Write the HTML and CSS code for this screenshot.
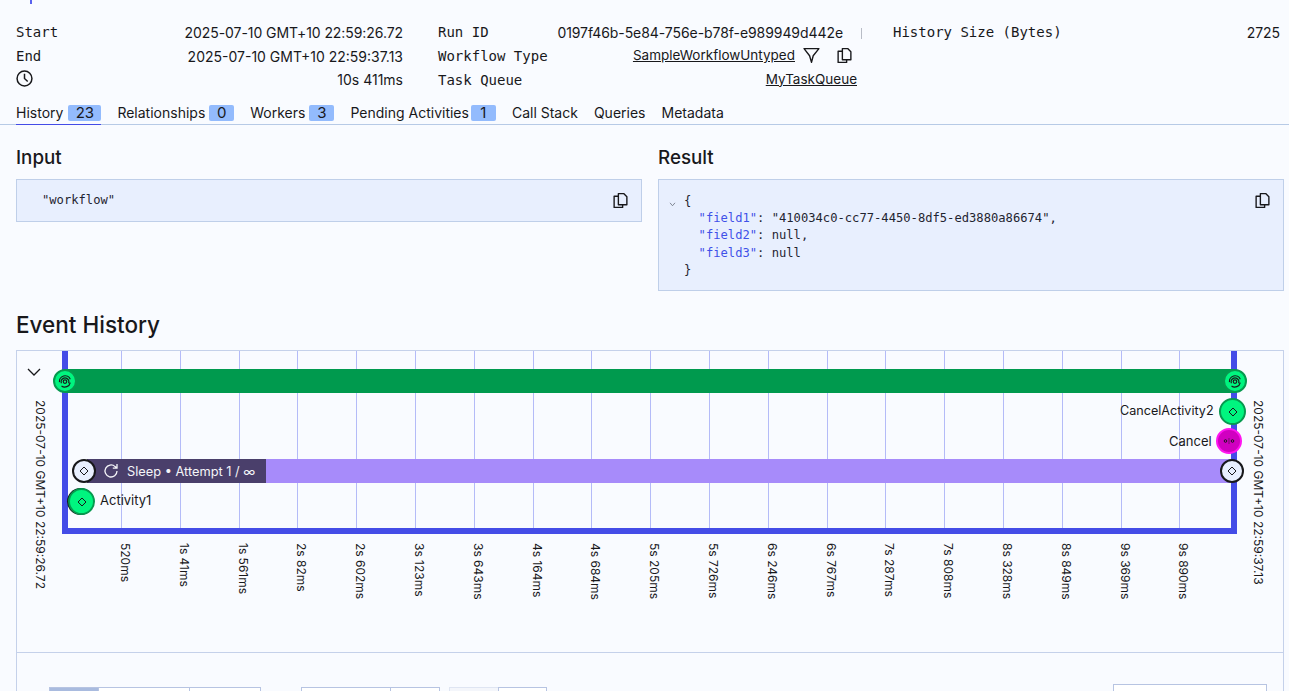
FILE: index.html
```html
<!DOCTYPE html>
<html lang="en">
<head>
	<meta charset="UTF-8">
	<meta name="viewport" content="width=device-width, initial-scale=1.0">
	<title>Workflow</title>
	<link rel="stylesheet" href="styles.css">
</head>
<body>

	<div class="top-mark"></div>

	<!-- summary -->
	<section class="summary">
		<div class="col">
			<div class="row"><span class="label">Start</span><span class="value">2025-07-10 GMT+10 22:59:26.72</span></div>
			<div class="row"><span class="label">End</span><span class="value">2025-07-10 GMT+10 22:59:37.13</span></div>
			<div class="row raised">
				<svg class="clock" viewBox="0 0 16 16"><circle cx="8" cy="8" r="7"/><path d="M8 3.6V8l3 2.8"/></svg>
				<span class="value">10s 411ms</span>
			</div>
		</div>
		<div class="col">
			<div class="row run-id"><span class="label">Run ID</span><span class="value">0197f46b-5e84-756e-b78f-e989949d442e</span></div>
			<div class="row">
				<span class="label">Workflow Type</span>
				<span class="type-value">
					<a href="#" class="link">SampleWorkflowUntyped</a>
					<svg class="icon" viewBox="0 0 16 16"><path d="M1 1.5h14L9.6 8.2 8 14.5 6.2 8.2z"/></svg>
					<svg class="icon copy" viewBox="0 0 16 16"><path d="M6 1.5h5l3 3v7.500H6zM6 4H2v10.500h8V12"/></svg>
				</span>
			</div>
			<div class="row"><span class="label">Task Queue</span><a href="#" class="link queue">MyTaskQueue</a></div>
		</div>
		<div class="col">
			<div class="row"><span class="label">History Size (Bytes)</span><span class="value">2725</span></div>
		</div>
	</section>

	<!-- tabs -->
	<nav class="tabs">
		<a href="#" class="tab active">History <span class="badge">23</span></a>
		<a href="#" class="tab">Relationships <span class="badge small">0</span></a>
		<a href="#" class="tab">Workers <span class="badge small">3</span></a>
		<a href="#" class="tab pending">Pending Activities <span class="badge small">1</span></a>
		<a href="#" class="tab">Call Stack</a>
		<a href="#" class="tab">Queries</a>
		<a href="#" class="tab">Metadata</a>
	</nav>

	<!-- input + result -->
	<section class="io">
		<div class="io-col">
			<h2>Input</h2>
			<div class="code-box">
				<div class="code">"workflow"</div>
				<svg class="icon copy box-copy" viewBox="0 0 16 16"><path d="M6 1.5h5l3 3v7.500H6zM6 4H2v10.500h8V12"/></svg>
			</div>
		</div>
		<div class="io-col">
			<h2>Result</h2>
			<div class="code-box">
				<svg class="fold" viewBox="0 0 8 6"><path d="M1 1l3 3.500L7 1"/></svg>
				<div class="code">{</div>
				<div class="code indent"><b>"field1"</b>: "410034c0-cc77-4450-8df5-ed3880a86674",</div>
				<div class="code indent"><b>"field2"</b>: null,</div>
				<div class="code indent"><b>"field3"</b>: null</div>
				<div class="code">}</div>
				<svg class="icon copy box-copy" viewBox="0 0 16 16"><path d="M6 1.5h5l3 3v7.500H6zM6 4H2v10.500h8V12"/></svg>
			</div>
		</div>
	</section>

	<h2 class="history-title">Event History</h2>

	<section class="history">
		<div class="timeline">
			<svg class="chevron" viewBox="0 0 14 8"><path d="M1 1l6 6 6-6"/></svg>

			<div class="ticks">
				<div class="tick"><i></i><span>520ms</span></div>
				<div class="tick"><i></i><span>1s 41ms</span></div>
				<div class="tick"><i></i><span>1s 561ms</span></div>
				<div class="tick"><i></i><span>2s 82ms</span></div>
				<div class="tick"><i></i><span>2s 602ms</span></div>
				<div class="tick"><i></i><span>3s 123ms</span></div>
				<div class="tick"><i></i><span>3s 643ms</span></div>
				<div class="tick"><i></i><span>4s 164ms</span></div>
				<div class="tick"><i></i><span>4s 684ms</span></div>
				<div class="tick"><i></i><span>5s 205ms</span></div>
				<div class="tick"><i></i><span>5s 726ms</span></div>
				<div class="tick"><i></i><span>6s 246ms</span></div>
				<div class="tick"><i></i><span>6s 767ms</span></div>
				<div class="tick"><i></i><span>7s 287ms</span></div>
				<div class="tick"><i></i><span>7s 808ms</span></div>
				<div class="tick"><i></i><span>8s 328ms</span></div>
				<div class="tick"><i></i><span>8s 849ms</span></div>
				<div class="tick"><i></i><span>9s 369ms</span></div>
				<div class="tick"><i></i><span>9s 890ms</span></div>
			</div>

			<div class="frame"></div>
			<span class="edge-date left">2025-07-10 GMT+10 22:59:26.72</span>
			<span class="edge-date right">2025-07-10 GMT+10 22:59:37.13</span>

			<div class="bar workflow-bar"></div>
			<div class="bar activity-bar"></div>
			<div class="bar attempt-bar">
				<svg class="retry" viewBox="0 0 16 16"><path d="M14 8a6 6 0 1 1-1.900-4.400L14 5.200M14 1v4.200H9.800"/></svg>
				<span>Sleep &bull; Attempt 1 / &infin;</span>
			</div>

			<div class="node green wf-start"><svg viewBox="0 0 12 12"><circle cx="6" cy="6.500" r="1.500"/><path d="M3 8a3.300 3.300 0 1 1 6 0M1.300 7A4.800 4.800 0 0 1 10.500 4.500M3 10.300a4.800 4.800 0 0 0 7.500-3"/></svg></div>
			<div class="node green wf-end"><svg viewBox="0 0 12 12"><circle cx="6" cy="6.500" r="1.500"/><path d="M3 8a3.300 3.300 0 1 1 6 0M1.300 7A4.800 4.800 0 0 1 10.500 4.500M3 10.300a4.800 4.800 0 0 0 7.500-3"/></svg></div>

			<div class="node pale attempt-start"><svg viewBox="0 0 12 12"><path d="M6 2l4 4-4 4-4-4z"/></svg></div>
			<div class="node pale attempt-end"><svg viewBox="0 0 12 12"><path d="M6 2l4 4-4 4-4-4z"/></svg></div>

			<div class="node green big activity1"><svg viewBox="0 0 12 12"><path d="M6 2l4 4-4 4-4-4z"/></svg></div>
			<span class="event-name activity1-name">Activity1</span>

			<div class="node green big cancel-activity"><svg viewBox="0 0 12 12"><path d="M6 2l4 4-4 4-4-4z"/></svg></div>
			<span class="event-name cancel-activity-name">CancelActivity2</span>

			<div class="node magenta cancel"><svg viewBox="0 0 12 12"><circle cx="2.500" cy="6" r="1.300"/><circle cx="9.500" cy="6" r="1.300"/><path d="M6 3.500v5" stroke-dasharray="1 1"/></svg></div>
			<span class="event-name cancel-name">Cancel</span>
		</div>

		<!-- filter row, cut off by the bottom of the window -->
		<div class="controls">
			<div class="button-group">
				<span class="btn selected w50"></span>
				<span class="btn w92"></span>
				<span class="btn w72"></span>
			</div>
			<div class="button-group">
				<span class="btn w90"></span>
				<span class="btn w50"></span>
			</div>
			<div class="button-group">
				<span class="btn faded w50"></span>
				<span class="btn w49"></span>
			</div>
			<span class="search"></span>
		</div>
	</section>

</body>
</html>
```
FILE: styles.css
```css
* {
	margin: 0;
	padding: 0;
	box-sizing: border-box;
}

body {
	height: 691px;
	overflow: hidden;
	background-color: #f9fbff;
	color: #18181b;
	font-family: Inter, "Liberation Sans", sans-serif;
	font-size: 14px;
	position: relative;
}

a {
	color: inherit;
}

.top-mark {
	position: absolute;
	left: 30px;
	top: 0;
	width: 2px;
	height: 4px;
	background-color: #5a62ee;
}

/*summary*/
.summary {
	display: flex;
	gap: 35px;
	padding: 20px 0 0 16px;
}

.col {
	width: 387px;
}

.col:nth-child(2) {
	width: 419px;
	margin-right: 1px;
}

.row {
	display: flex;
	justify-content: space-between;
	align-items: center;
	height: 24px;
}

.label {
	font-family: "DejaVu Sans Mono", monospace;
}

.row:first-child .value {
	letter-spacing: -0.07px;
}

.raised .value {
	margin-bottom: 1px;
}

.link {
	font-size: 13.500px;
}

.queue {
	margin-bottom: 3px;
}

.run-id {
	padding-right: 14px;
	position: relative;
}

.run-id::after {
	content: "";
	position: absolute;
	right: -5px;
	top: 8px;
	width: 1px;
	height: 11px;
	background-color: #b8bcc6;
}

.clock {
	width: 17px;
	height: 17px;
	fill: none;
	stroke: #18181b;
	stroke-width: 1.4;
	margin-bottom: 3px;
}

.type-value {
	display: flex;
	align-items: center;
	margin-left: auto;
	margin-right: 4px;
	margin-bottom: 2px;
}

.icon {
	width: 17px;
	height: 17px;
	fill: none;
	stroke: #18181b;
	stroke-width: 1.3;
	stroke-linejoin: round;
	margin-left: 8px;
}

.icon.copy {
	margin-left: 16px;
}

/*tabs*/
.tabs {
	display: flex;
	gap: 16px;
	height: 21px;
	margin-top: 12px;
	padding: 0 0 0 16px;
	border-bottom: 1px solid #b7cae6;
}

.tab {
	display: flex;
	align-items: flex-start;
	gap: 4px;
	height: 21px;
	line-height: 18px;
	text-decoration: none;
}

.tab.active {
	gap: 5px;
	border-bottom: 1px solid #444ce7;
}

.tab.pending {
	gap: 2px;
}

.badge {
	width: 33px;
	height: 16px;
	margin-top: 1px;
	background-color: #93bbfd;
	border-radius: 2px;
	font-size: 15px;
	text-align: center;
	line-height: 16px;
}

.badge.small {
	width: 25px;
}

/*input result*/
.io {
	display: flex;
	gap: 16px;
	padding: 0 5px 0 16px;
}

.io-col {
	width: 626px;
}

h2 {
	font-size: 18.800px;
	font-weight: 500;
	line-height: 24px;
	margin-top: 21px;
	margin-bottom: 9px;
}

.code-box {
	position: relative;
	background-color: #e8effe;
	border: 1px solid #bfcfe9;
	padding: 12px 25px;
	min-height: 43px;
}

.io-col:nth-child(2) .code-box {
	height: 112px;
	padding-top: 13px;
}

.code {
	font-family: "DejaVu Sans Mono", monospace;
	font-size: 12.150px;
	line-height: 17.200px;
	color: #1f2430;
	white-space: pre;
}

.code b {
	font-weight: normal;
	color: #3f51e8;
}

.indent {
	padding-left: 14.600px;
}

.box-copy {
	position: absolute;
	right: 12px;
	top: 12px;
	margin: 0;
}

.fold {
	position: absolute;
	left: 10px;
	top: 22px;
	width: 7px;
	height: 5px;
	fill: none;
	stroke: #6b7280;
	stroke-width: 1;
}

/*event history*/
.history-title {
	font-size: 22.500px;
	line-height: 28px;
	margin: 20px 0 11px 16px;
}

.history {
	margin: 0 5px 0 16px;
	height: 360px;
	border: 1px solid #c5d1ea;
}

.timeline {
	position: relative;
	height: 302px;
	border-bottom: 1px solid #c5d1ea;
	font-size: 12px;
}

.chevron {
	position: absolute;
	left: 10px;
	top: 17px;
	width: 14px;
	height: 8px;
	fill: none;
	stroke: #18181b;
	stroke-width: 1.300;
}

.ticks {
	position: absolute;
	left: 104px;
	top: 0;
	display: flex;
}

.tick {
	flex: none;
	width: 58.800px;
}

.tick i {
	display: block;
	height: 178px;
	width: 1px;
	background-color: #b4bbf8;
}

.tick span {
	display: block;
	margin-top: 14px;
	writing-mode: vertical-rl;
	white-space: nowrap;
	line-height: 14px;
	margin-left: -3px;
}

.frame {
	position: absolute;
	left: 45px;
	top: 0;
	width: 1175px;
	height: 183px;
	border: solid #444ce7;
	border-width: 0 6px 6px 6px;
}

.edge-date {
	position: absolute;
	top: 49px;
	writing-mode: vertical-rl;
	white-space: nowrap;
	line-height: 14px;
}

.edge-date.left {
	left: 16px;
}

.edge-date.right {
	left: 1234px;
}

.bar {
	position: absolute;
}

.workflow-bar {
	left: 48px;
	top: 18px;
	width: 1170px;
	height: 24px;
	background-color: #009a4e;
}

.activity-bar {
	left: 70px;
	top: 108px;
	width: 1145px;
	height: 24px;
	background-color: #a78bfa;
}

.attempt-bar {
	left: 70px;
	top: 108px;
	width: 179px;
	height: 24px;
	background-color: #4a3f6b;
	color: #f4f4f8;
	font-size: 12.800px;
	display: flex;
	align-items: center;
	gap: 8px;
	padding-left: 16px;
}

.retry {
	width: 16px;
	height: 16px;
	fill: none;
	stroke: #f4f4f8;
	stroke-width: 1.300;
}

.node {
	position: absolute;
	width: 24px;
	height: 24px;
	border-radius: 50%;
	display: flex;
	align-items: center;
	justify-content: center;
}

.node svg {
	width: 12px;
	height: 12px;
	fill: none;
	stroke: #18181b;
	stroke-width: 1;
}

.node.green {
	background-color: #00f57f;
	border: 2px solid #06994f;
}

.wf-start svg,
.wf-end svg {
	width: 14px;
	height: 14px;
}

.node.big {
	width: 27px;
	height: 27px;
}

.node.pale {
	background-color: #e8effe;
	border: 2px solid #18181b;
}

.node.magenta {
	width: 26px;
	height: 26px;
	background-color: #d000c0;
	border: 2px solid #ff14f0;
}

.wf-start {
	left: 36px;
	top: 18px;
}

.wf-end {
	left: 1206px;
	top: 18px;
}

.attempt-start {
	left: 55px;
	top: 108px;
}

.attempt-end {
	left: 1203px;
	top: 108px;
}

.activity1 {
	left: 51px;
	top: 137px;
	box-shadow: -1px 0 0 #18181b;
}

.cancel-activity {
	left: 1202px;
	top: 47px;
}

.cancel {
	left: 1199px;
	top: 77px;
}

.event-name {
	position: absolute;
	font-size: 13px;
	line-height: 16px;
	white-space: nowrap;
}

.activity1-name {
	left: 83px;
	top: 141px;
}

.cancel-activity-name {
	left: 1103px;
	top: 52px;
	font-size: 12.600px;
}

.cancel-name {
	left: 1152px;
	top: 82px;
}

/*controls*/
.controls {
	display: flex;
	align-items: flex-start;
	gap: 40px;
	padding: 31px 16px 0 32px;
}

.button-group {
	display: flex;
	margin-top: 3px;
}

.button-group + .button-group + .button-group {
	margin-left: -31px;
}

.btn {
	display: block;
	height: 30px;
	background-color: #fff;
	border: 1px solid #b7c4e2;
}

.btn + .btn {
	margin-left: -1px;
}

.btn.selected {
	background-color: #a9bbdf;
}

.btn.faded {
	background-color: #f4f6fb;
	border-color: #dfe5f2;
}

.w50 {
	width: 50px;
}

.w49 {
	width: 49px;
}

.w72 {
	width: 72px;
}

.w90 {
	width: 90px;
}

.w92 {
	width: 92px;
}

.search {
	display: block;
	width: 154px;
	height: 36px;
	margin-left: auto;
	background-color: #fff;
	border: 1px solid #b7c4e2;
}
```
